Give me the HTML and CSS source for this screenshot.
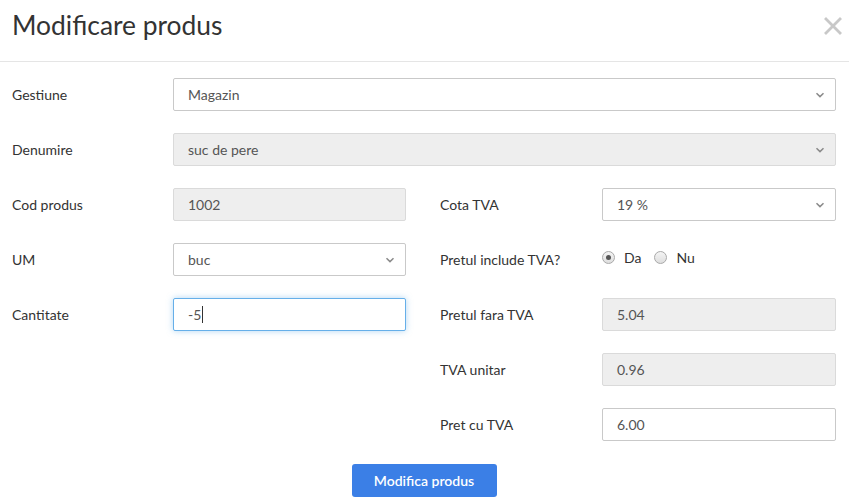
FILE: index.html
```html
<!DOCTYPE html>
<html lang="ro">
<head>
    <meta charset="UTF-8">
    <title>Modificare produs</title>
    <link rel="stylesheet" href="styles.css">
</head>
<body>
    <div class="modal">
        <div class="modal-header">
            <h1>Modificare produs</h1>
            <button class="close" aria-label="Inchide">
                <svg width="18" height="18" viewBox="0 0 18 18"><path d="M2 2 L16 16 M16 2 L2 16" stroke="#c8c8c8" stroke-width="2.8" stroke-linecap="square"/></svg>
            </button>
        </div>

        <div class="modal-body">
            <div class="row">
                <label>Gestiune</label>
                <div class="field select">
                    <span>Magazin</span>
                    <svg class="chev" width="10" height="6" viewBox="0 0 10 6"><path d="M1.5 1.2 L5 4.6 L8.5 1.2" fill="none" stroke="#8a8a8a" stroke-width="1.5"/></svg>
                </div>
            </div>
            <div class="row">
                <label>Denumire</label>
                <div class="field select disabled">
                    <span>suc de pere</span>
                    <svg class="chev" width="10" height="6" viewBox="0 0 10 6"><path d="M1.5 1.2 L5 4.6 L8.5 1.2" fill="none" stroke="#8a8a8a" stroke-width="1.5"/></svg>
                </div>
            </div>

            <div class="columns">
                <div class="col">
                    <div class="row">
                        <label>Cod produs</label>
                        <div class="field disabled"><span>1002</span></div>
                    </div>
                    <div class="row">
                        <label>UM</label>
                        <div class="field select">
                            <span>buc</span>
                            <svg class="chev" width="10" height="6" viewBox="0 0 10 6"><path d="M1.5 1.2 L5 4.6 L8.5 1.2" fill="none" stroke="#8a8a8a" stroke-width="1.5"/></svg>
                        </div>
                    </div>
                    <div class="row">
                        <label>Cantitate</label>
                        <div class="field focused"><span>-5</span><span class="caret"></span></div>
                    </div>
                </div>

                <div class="col col-right">
                    <div class="row">
                        <label>Cota TVA</label>
                        <div class="field select">
                            <span>19 %</span>
                            <svg class="chev" width="10" height="6" viewBox="0 0 10 6"><path d="M1.5 1.2 L5 4.6 L8.5 1.2" fill="none" stroke="#8a8a8a" stroke-width="1.5"/></svg>
                        </div>
                    </div>
                    <div class="row">
                        <label>Pretul include TVA?</label>
                        <div class="radios">
                            <span class="radio checked"></span><span class="radio-label">Da</span>
                            <span class="radio"></span><span class="radio-label">Nu</span>
                        </div>
                    </div>
                    <div class="row">
                        <label>Pretul fara TVA</label>
                        <div class="field disabled"><span>5.04</span></div>
                    </div>
                    <div class="row">
                        <label>TVA unitar</label>
                        <div class="field disabled"><span>0.96</span></div>
                    </div>
                    <div class="row">
                        <label>Pret cu TVA</label>
                        <div class="field"><span>6.00</span></div>
                    </div>
                </div>
            </div>

            <div class="actions">
                <button class="btn-primary">Modifica produs</button>
            </div>
        </div>
    </div>
</body>
</html>
```

FILE: styles.css
```css
* {
    margin: 0;
    padding: 0;
    box-sizing: border-box;
}

body {
    font-family: Lato, 'Open Sans', sans-serif;
    font-size: 14px;
    color: #333;
    background-color: #fff;
    width: 849px;
}

.modal-header {
    height: 62px;
    padding: 0 7px 0 12px;
    border-bottom: 1px solid #e5e5e5;
    display: flex;
    align-items: flex-start;
    justify-content: space-between;
}

.modal-header h1 {
    font-size: 26.4px;
    font-weight: normal;
    line-height: 1;
    margin-top: 12px;
    color: #333;
}

.close {
    background: none;
    border: none;
    margin-top: 17px;
    width: 18px;
    height: 18px;
    cursor: pointer;
}

.modal-body {
    padding: 16px 13px 0 12px;
    display: flex;
    flex-direction: column;
    gap: 22px;
}

.row {
    display: flex;
    align-items: center;
    height: 33px;
}

.row label {
    width: 161px;
    flex-shrink: 0;
}

.col-right .row label {
    width: 162px;
}

.field {
    flex: 1;
    height: 33px;
    border: 1px solid #c9c9c9;
    border-radius: 2px;
    padding: 0 14px;
    display: flex;
    align-items: center;
    color: #555;
    background: #fff;
}

.field.disabled {
    background-color: #eeeeee;
    border-color: #dadada;
}

.field.select {
    justify-content: space-between;
    padding-right: 10px;
}

.field.focused {
    border-color: #66afe9;
    box-shadow: 0 0 6px rgba(102, 175, 233, 0.5);
}

.caret {
    display: inline-block;
    width: 1px;
    height: 17px;
    background: #333;
    margin-left: 1px;
}

.columns {
    display: grid;
    grid-template-columns: 394px 396px;
    column-gap: 34px;
}

.col {
    display: flex;
    flex-direction: column;
    gap: 22px;
}

.radios {
    display: flex;
    align-items: center;
    margin-top: -4px;
}

.radio {
    width: 13px;
    height: 13px;
    border-radius: 50%;
    border: 1px solid #a9a9a9;
    background: linear-gradient(#f4f4f4, #dedede);
    position: relative;
}

.radio.checked::after {
    content: '';
    position: absolute;
    left: 3px;
    top: 3px;
    width: 5px;
    height: 5px;
    border-radius: 50%;
    background: #555;
}

.radio-label {
    margin-left: 9px;
    margin-right: 13px;
    font-size: 14px;
}

.actions {
    display: flex;
    justify-content: center;
    margin-top: 1px;
}

.btn-primary {
    width: 145px;
    height: 33px;
    border: none;
    border-radius: 3px;
    background-color: #3b7fe6;
    color: #fff;
    font-family: Lato, sans-serif;
    font-size: 14px;
    font-weight: 600;
    cursor: pointer;
}
```
